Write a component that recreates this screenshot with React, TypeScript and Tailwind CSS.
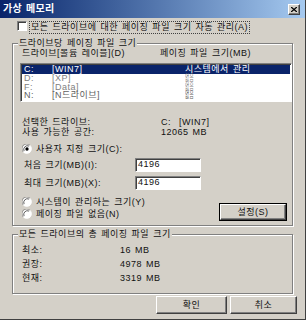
import React from "react";

const raised =
  "border border-t-white border-l-white border-r-[#404040] border-b-[#404040] shadow-[inset_-1px_-1px_0_#808080]";
const sunken =
  "border border-t-[#808080] border-l-[#808080] border-r-white border-b-white shadow-[inset_1px_1px_0_#404040]";
const etched = "border border-[#808080] shadow-[1px_1px_0_#fff,inset_1px_1px_0_#fff]";

function Radio({ checked }: { checked?: boolean }) {
  return (
    <svg width="10" height="10" viewBox="0 0 12 12" className="shrink-0">
      <circle cx="6" cy="6" r="5.5" fill="#fff" />
      <path d="M1.5 9.5 A5.5 5.5 0 0 1 9.5 1.5" stroke="#808080" strokeWidth="1" fill="none" />
      <path d="M2.5 8.5 A4.5 4.5 0 0 1 8.5 2.5" stroke="#404040" strokeWidth="1" fill="none" />
      <path d="M9.5 1.5 A5.5 5.5 0 0 1 1.5 9.5" stroke="#fff" strokeWidth="1" fill="none" />
      {checked && <circle cx="6" cy="6" r="2" fill="#000" />}
    </svg>
  );
}

export default function App() {
  return (
    <div className="w-[306px] h-[320px] bg-[#d4d0c8] font-['Liberation_Sans','Noto_Sans_CJK_KR',sans-serif] text-[9px] tracking-[0.5px] [word-spacing:1px] leading-[10px] text-[#111] overflow-hidden flex flex-col border-r border-b border-[#404040]">
      {/* Title bar */}
      <div className="h-[18px] shrink-0 bg-linear-to-r from-[#0a246a] to-[#a6caf0] flex items-center justify-between pl-[3px] pr-[5px]">
        <span className="text-white font-bold text-[10px] tracking-[0.3px] leading-[12px]">가상 메모리</span>
        <div className={`w-[12px] h-[11px] bg-[#d4d0c8] ${raised} flex items-center justify-center`}>
          <svg width="6" height="5" viewBox="0 0 6 5">
            <path d="M0 0 L6 5 M6 0 L0 5" stroke="#000" strokeWidth="1.3" />
          </svg>
        </div>
      </div>

      {/* Checkbox row */}
      <div className="mt-[3px] pl-[17px] flex items-start h-[13px]">
        <div className={`w-[10px] h-[10px] bg-white ${sunken}`} />
        <div className="ml-[2px] border border-dotted border-[#404040] h-[13px] px-[1px] leading-[11px] whitespace-nowrap">
          모든 드라이브에 대한 페이징 파일 크기 자동 관리(A)
        </div>
      </div>

      {/* Group 1 */}
      <div className={`relative mt-[9px] ml-[12px] w-[281px] h-[183px] shrink-0 ${etched}`}>
        <div className="absolute left-[5px] top-[-6px] bg-[#d4d0c8] px-[1px] leading-[11px] whitespace-nowrap">
          드라이브당 페이징 파일 크기
        </div>
        <div className="pt-[4px] flex h-[15px] whitespace-nowrap">
          <div className="pl-[9px] w-[147px]">드라이브[볼륨 레이블](D)</div>
          <div>페이징 파일 크기(MB)</div>
        </div>
        {/* List */}
        <div className={`mt-[4px] ml-[7px] w-[272px] h-[39px] bg-white ${sunken} py-[1px] px-[1px] leading-[9px] whitespace-nowrap`}>
          <div className="h-[8.75px] bg-[#0a246a] text-white flex">
            <span className="pl-[2px] w-[30px]">C:</span>
            <span className="w-[133px]">[WIN7]</span>
            <span>시스템에서 관리</span>
          </div>
          <div className="h-[8.75px] text-[#808080] flex">
            <span className="pl-[2px] w-[30px]">D:</span>
            <span className="w-[133px]">[XP]</span>
            <span className="inline-block scale-x-50 origin-left">없음</span>
          </div>
          <div className="h-[8.75px] text-[#808080] flex">
            <span className="pl-[2px] w-[30px]">F:</span>
            <span className="w-[133px]">[Data]</span>
            <span className="inline-block scale-x-50 origin-left">없음</span>
          </div>
          <div className="h-[8.75px] text-[#606060] flex">
            <span className="pl-[2px] w-[30px]">N:</span>
            <span className="w-[133px]">[N드라이브]</span>
            <span className="inline-block scale-x-50 origin-left">없음</span>
          </div>
        </div>

        {/* Selected drive info */}
        <div className="mt-[15px] pl-[9px] flex h-[10px] whitespace-nowrap">
          <div className="w-[139px]">선택한 드라이브:</div>
          <div>C:&nbsp;&nbsp;[WIN7]</div>
        </div>
        <div className="pl-[9px] flex h-[10px] whitespace-nowrap">
          <div className="w-[139px]">사용 가능한 공간:</div>
          <div>12065 MB</div>
        </div>

        <div className="mt-[6px] pl-[9px] flex items-center gap-[4px] h-[11px] whitespace-nowrap">
          <Radio checked />
          <span>사용자 지정 크기(C):</span>
        </div>

        <div className="mt-[4px] pl-[11px] flex items-center h-[14px] whitespace-nowrap">
          <div className="w-[111px]">처음 크기(MB)(I):</div>
          <div className={`w-[66px] h-[14px] bg-white ${sunken} pl-[2px] leading-[11px]`}>4196</div>
        </div>
        <div className="mt-[4px] pl-[11px] flex items-center h-[14px] whitespace-nowrap">
          <div className="w-[111px]">최대 크기(MB)(X):</div>
          <div className={`w-[66px] h-[14px] bg-white ${sunken} pl-[2px] leading-[11px]`}>4196</div>
        </div>

        <div className="mt-[6px] pl-[9px] flex justify-between pr-[5px]">
          <div className="flex flex-col gap-[2px] pt-[1px]">
            <div className="flex items-center gap-[4px] h-[10px] whitespace-nowrap">
              <Radio />
              <span>시스템이 관리하는 크기(Y)</span>
            </div>
            <div className="flex items-center gap-[4px] h-[10px] whitespace-nowrap">
              <Radio />
              <span>페이징 파일 없음(N)</span>
            </div>
          </div>
          <div className="mt-[7px] w-[68px] h-[18px] border border-black">
            <div className={`w-full h-full ${raised} flex items-center justify-center leading-[10px]`}>
              설정(S)
            </div>
          </div>
        </div>
      </div>

      {/* Group 2 */}
      <div className={`relative mt-[8px] ml-[12px] w-[281px] h-[60px] shrink-0 ${etched}`}>
        <div className="absolute left-[5px] top-[-6px] bg-[#d4d0c8] px-[1px] leading-[11px] whitespace-nowrap">
          모든 드라이브의 총 페이징 파일 크기
        </div>
        <div className="pt-[10px] pl-[9px] flex flex-col gap-[4px] whitespace-nowrap">
          <div className="flex h-[10px]">
            <div className="w-[98px]">최소:</div>
            <div>16 MB</div>
          </div>
          <div className="flex h-[10px]">
            <div className="w-[98px]">권장:</div>
            <div>4978 MB</div>
          </div>
          <div className="flex h-[10px]">
            <div className="w-[98px]">현재:</div>
            <div>3319 MB</div>
          </div>
        </div>
      </div>

      {/* Buttons */}
      <div className="mt-[2px] flex justify-end gap-[3px] pr-[8px]">
        <div className={`w-[71px] h-[18px] ${raised} flex items-center justify-center`}>확인</div>
        <div className={`w-[67px] h-[18px] ${raised} flex items-center justify-center`}>취소</div>
      </div>
    </div>
  );
}
